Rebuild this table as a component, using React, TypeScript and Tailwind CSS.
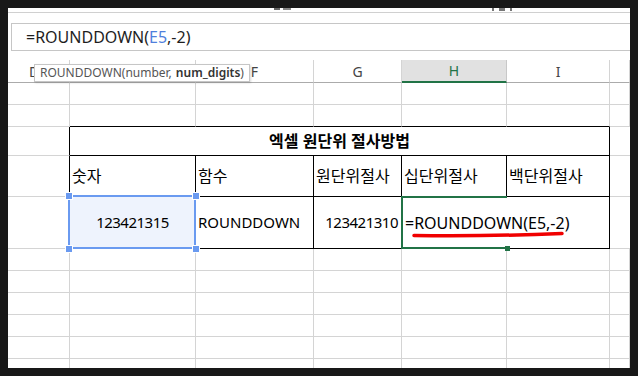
import React from "react";

const FONT = { fontFamily: '"Noto Sans", "Noto Sans CJK KR", sans-serif' };

const headers = ["D", "E", "F", "G", "H", "I", ""];

function GridRow({ h, black = false }: { h: string; black?: boolean }) {
  // plain empty spreadsheet row; black = bottom edge is the table's top border
  return (
    <>
      {headers.map((c, i) => (
        <div
          key={c + i}
          className={`${h} border-r border-b border-[#d4d4d4] ${
            black && i >= 1 && i <= 5 ? "border-b-black" : ""
          }`}
        />
      ))}
    </>
  );
}

export default function App() {
  return (
    <div className="h-[376px] w-[638px] bg-[#181818] p-[8px]" style={FONT}>
      <div className="h-[360px] overflow-hidden bg-white">
        {/* cut-off ribbon strip */}
        <div className="relative h-[5px] border-b border-[#d0d0d0]">
          <div className="absolute left-[266px] top-0 flex gap-[3px]">
            <span className="h-[2px] w-[6px] bg-[#666]" />
            <span className="h-[2px] w-[8px] bg-[#888]" />
          </div>
          <div className="absolute left-[484px] top-0 flex gap-[5px]">
            <span className="h-[3px] w-[2px] bg-[#777]" />
            <span className="h-[3px] w-[6px] bg-[#777]" />
            <span className="h-[3px] w-[2px] bg-[#777]" />
          </div>
        </div>
        <div className="h-[10px]" />

        {/* formula bar */}
        <div className="ml-[3px] flex h-[28px] items-center border-t border-b border-l border-[#c6c6c6] pl-[14px] text-[16px] text-[#1e1e1e]">
          <span>
            =ROUNDDOWN(<span className="text-[#4f7fdc]">E5</span>,-2)
          </span>
        </div>
        <div className="h-[9px]" />

        {/* column headers */}
        <div className="relative grid grid-cols-[62px_126px_118px_88px_105px_103px_1fr]">
          {headers.map((c, i) => (
            <div
              key={c + i}
              className={`flex h-[23px] items-center justify-center border-b text-[14px] ${
                c === "H"
                  ? "border-r border-r-[#c8c8c8] border-b-2 border-b-[#217346] bg-[#e1e1e1] text-[#217346]"
                  : "border-r border-r-[#d4d4d4] border-b-[#ababab] text-[#444]"
              } ${i === 0 ? "justify-start pl-[21px]" : ""}`}
            >
              {c}
            </div>
          ))}
          {/* function tooltip */}
          <div className="absolute left-[26px] top-[4px] flex h-[18px] items-center border border-[#c6c6c6] bg-white pl-[5px] pr-[5px] text-[12px] text-[#555] shadow-[1px_1px_2px_rgba(0,0,0,0.15)]">
            ROUNDDOWN(number,<b className="ml-[4px] font-semibold text-[#333]">num_digits</b>)
          </div>
        </div>

        {/* sheet body */}
        <div className="grid grid-cols-[62px_126px_118px_88px_105px_103px_1fr] text-[15px] text-black">
          <GridRow h="h-[22px]" />
          <GridRow h="h-[22px]" black />

          {/* title row */}
          <div className="h-[29px] border-r border-b border-r-black border-b-[#d4d4d4]" />
          <div className="col-span-5 flex h-[29px] items-center justify-center border-r border-b border-black text-[16px] font-bold">
            엑셀 원단위 절사방법
          </div>
          <div className="h-[29px] border-b border-[#d4d4d4]" />

          {/* header row */}
          <div className="h-[41px] border-r border-b border-r-black border-b-[#d4d4d4]" />
          {["숫자", "함수", "원단위절사", "십단위절사", "백단위절사"].map((t) => (
            <div
              key={t}
              className="flex h-[41px] items-center border-r border-b border-black pl-[2px] text-[16px]"
            >
              {t}
            </div>
          ))}
          <div className="h-[41px] border-b border-[#d4d4d4]" />

          {/* data row */}
          <div className="h-[52px] border-r border-b border-r-black border-b-[#d4d4d4]" />
          <div className="relative flex h-[52px] items-center justify-center border-r border-b border-black bg-[#eef3fd] tracking-[-0.5px]">
            123421315
            <div className="absolute -left-[2px] -top-[2px] h-[54px] w-[128px] border-2 border-[#6a9af0]" />
            <span className="absolute -left-[4px] -top-[4px] h-[6px] w-[6px] bg-[#6a9af0] ring-1 ring-white" />
            <span className="absolute -right-[4px] -top-[4px] h-[6px] w-[6px] bg-[#6a9af0] ring-1 ring-white" />
            <span className="absolute -bottom-[4px] -left-[4px] h-[6px] w-[6px] bg-[#6a9af0] ring-1 ring-white" />
            <span className="absolute -bottom-[4px] -right-[4px] h-[6px] w-[6px] bg-[#6a9af0] ring-1 ring-white" />
          </div>
          <div className="flex h-[52px] items-center border-r border-b border-black pl-[2px]">
            ROUNDDOWN
          </div>
          <div className="flex h-[52px] items-center justify-end border-r border-b border-black pr-[3px] tracking-[-0.5px]">
            123421310
          </div>
          <div className="relative z-10 flex h-[52px] items-center whitespace-nowrap border-b border-black pl-[3px] text-[16px]">
            =ROUNDDOWN(E5,-2)
            <div className="absolute -left-[1px] -top-[1px] h-[53px] w-[106px] border-2 border-r-0 border-[#217346]" />
            <span className="absolute -bottom-[3px] -right-[3px] h-[5px] w-[5px] bg-[#217346]" />
            <svg
              className="absolute left-[10px] top-[35px] overflow-visible"
              width="152"
              height="6"
              viewBox="0 0 152 6"
            >
              <path
                d="M2 3.5 C 40 4, 100 3.5, 150 1.5"
                stroke="#f00000"
                strokeWidth="3.5"
                strokeLinecap="round"
                fill="none"
              />
            </svg>
          </div>
          <div className="h-[52px] border-r border-b border-black" />
          <div className="h-[52px] border-b border-[#d4d4d4]" />

          {[0, 1, 2, 3, 4, 5].map((r) => (
            <GridRow key={r} h="h-[22px]" />
          ))}
        </div>
      </div>
    </div>
  );
}
